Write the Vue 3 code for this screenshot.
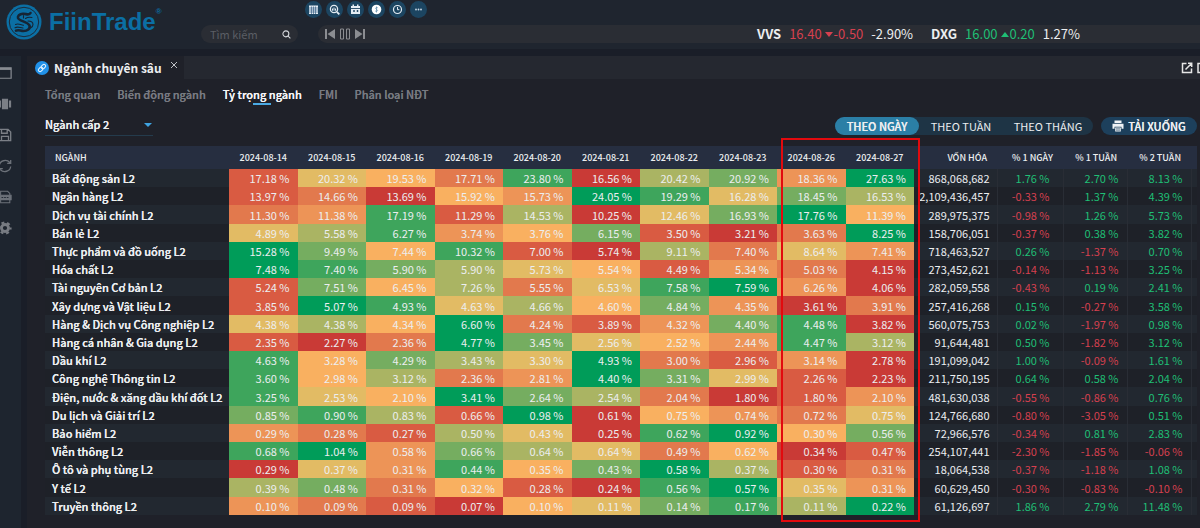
<script setup>
import { ref } from 'vue'

const dates = [
  '2024-08-14', '2024-08-15', '2024-08-16', '2024-08-19', '2024-08-20',
  '2024-08-21', '2024-08-22', '2024-08-23', '2024-08-26', '2024-08-27',
]

// name | daily weights | heat level per day (0 lowest, 9 highest) | market cap | 1 day, 1 week, 2 weeks
const source = [
  'Bất động sản L2|17.18 20.32 19.53 17.71 23.80 16.56 20.42 20.92 18.36 27.63|1542806739|868,068,682|1.76 2.70 8.13',
  'Ngân hàng L2|13.97 14.66 13.69 15.92 15.73 24.05 19.29 16.28 18.45 16.53|1204398576|2,109,436,457|-0.33 1.37 4.39',
  'Dịch vụ tài chính L2|11.30 11.38 17.19 11.29 14.53 10.25 12.46 16.93 17.76 11.39|2381605794|289,975,375|-0.98 1.26 5.73',
  'Bán lẻ L2|4.89 5.58 6.27 3.74 3.76 6.15 3.50 3.21 3.63 8.25|5683471029|158,706,051|-0.37 0.38 3.82',
  'Thực phẩm và đồ uống L2|15.28 9.49 7.44 10.32 7.00 5.74 9.11 7.40 8.64 7.41|9748106253|718,463,527|0.26 -1.37 0.70',
  'Hóa chất L2|7.48 7.40 5.90 5.90 5.73 5.54 4.49 5.34 5.03 4.15|9876541320|273,452,621|-0.14 -1.13 3.25',
  'Tài nguyên Cơ bản L2|5.24 7.51 6.45 7.26 5.55 6.53 7.58 7.59 6.26 4.06|1746258930|282,059,558|-0.43 0.19 2.41',
  'Xây dựng và Vật liệu L2|3.85 5.07 4.93 4.63 4.66 4.60 4.84 4.35 3.61 3.91|1985647302|257,416,268|0.15 -0.27 3.58',
  'Hàng & Dịch vụ Công nghiệp L2|4.38 4.38 4.34 6.60 4.24 3.89 4.32 4.40 4.48 3.82|5649213780|560,075,753|0.02 -1.97 0.98',
  'Hàng cá nhân & Gia dụng L2|2.35 2.27 2.36 4.77 3.45 2.56 2.52 2.44 4.47 3.12|1029754386|91,644,481|0.50 -1.82 3.12',
  'Dầu khí L2|4.63 3.28 4.29 3.43 3.30 4.93 3.00 2.96 3.14 2.78|8476592130|191,099,042|1.00 -0.09 1.61',
  'Công nghệ Thông tin L2|3.60 2.98 3.12 2.36 2.81 4.40 3.31 2.99 2.26 2.23|8462397510|211,750,195|0.64 0.58 2.04',
  'Điện, nước & xăng dầu khí đốt L2|3.25 2.53 2.10 3.41 2.64 2.54 2.04 1.80 1.80 2.10|8549762013|481,630,038|-0.55 -0.86 0.76',
  'Du lịch và Giải trí L2|0.85 0.90 0.83 0.66 0.98 0.61 0.75 0.74 0.72 0.75|7861904325|124,766,680|-0.80 -3.05 0.51',
  'Bảo hiểm L2|0.29 0.28 0.27 0.50 0.43 0.25 0.62 0.92 0.30 0.56|3216508947|72,966,576|-0.34 0.81 2.83',
  'Viễn thông L2|0.68 1.04 0.58 0.66 0.64 0.64 0.49 0.62 0.34 0.47|8937652401|254,107,441|-2.30 -1.85 -0.06',
  'Ô tô và phụ tùng L2|0.29 0.37 0.31 0.44 0.35 0.43 0.58 0.37 0.30 0.31|0538479612|18,064,538|-0.37 -1.18 1.08',
  'Y tế L2|0.39 0.48 0.31 0.32 0.28 0.24 0.56 0.57 0.35 0.31|6724108953|60,629,450|-0.30 -0.83 -0.10',
  'Truyền thông L2|0.10 0.09 0.09 0.07 0.10 0.11 0.14 0.17 0.11 0.22|3210457869|61,126,697|1.86 2.79 11.48',
]

const rows = source.map((line) => {
  const [name, weights, levels, cap, changes] = line.split('|')
  return {
    name,
    cap,
    cells: weights.split(' ').map((value, i) => ({ value, level: levels[i] })),
    changes: changes.split(' '),
  }
})

const tabs = ['Tổng quan', 'Biến động ngành', 'Tỷ trọng ngành', 'FMI', 'Phân loại NĐT']
const activeTab = ref('Tỷ trọng ngành')
const periods = ['THEO NGÀY', 'THEO TUẦN', 'THEO THÁNG']
const activePeriod = ref('THEO NGÀY')
const level = ref('Ngành cấp 2')
const query = ref('')
</script>

<template>
  <div class="app">
    <header class="top">
      <a class="brand" href="#" aria-label="FiinTrade">
        <svg class="brand-mark" viewBox="0 0 36 36" aria-hidden="true">
          <circle cx="18" cy="18" r="17.5" fill="#0b6fa4" />
          <circle cx="18" cy="18" r="14.7" fill="none" stroke="#1c2a38" stroke-width="1" />
          <g fill="none" stroke="#162534" stroke-linecap="round">
            <path d="M24.500 9c-1.500 3-4.500.500-7.500.700-3.800.300-5.500 2.300-5 4.300.800 3 10 3.800 11.500 7.500 1 3.400-2.200 5.500-6 5.500-3.200 0-4.600-1.800-7.500-.300" stroke-width="2.600" />
            <path d="M9.500 20.500c3-1.500 5 .500 8 .700M9 23.700c3-1.500 5.500.300 8 .300M17.500 11.500v2.500M19.500 14.500c2-1.500 4-1.500 6.500-1M22 17c3 0 5 1.500 5 3.500s-1 2.500-2.500 3.500" stroke-width="1.100" />
          </g>
        </svg>
        <span class="brand-name">FiinTrade<sup>®</sup></span>
      </a>

      <div class="top-main">
        <nav class="quick" aria-label="Công cụ">
          <button type="button" aria-label="Bảng giá">
            <svg viewBox="0 0 17 17"><rect x="4" y="4.500" width="9" height="8.500" fill="#e4ecf3" /><path d="M4 7h9M4 9h9M4 11h9M6.500 5.500v7.500M8.500 5.500v7.500M10.500 5.500v7.500" stroke="#24527a" stroke-width=".6" /></svg>
          </button>
          <button type="button" aria-label="Phân tích">
            <svg viewBox="0 0 17 17" fill="none" stroke="#e4ecf3"><circle cx="8" cy="8" r="3.600" stroke-width="1.300" /><path d="M10.800 10.800l2.500 2.500" stroke-width="1.800" /><path d="M6.500 7.500v2.200M8 6.500v3.200M9.500 7.500v2.200" stroke-width="1" /></svg>
          </button>
          <button type="button" aria-label="Lịch sự kiện">
            <svg viewBox="0 0 17 17"><path d="M4 5h9v8H4zM5.500 3.500h1.500V5H5.500zM10 3.500h1.500V5H10z" fill="#e4ecf3" /><path d="M4 7.500h9M6 10h2M9.500 10h2M7 9v2M10.500 9v2" stroke="#1d4460" stroke-width=".9" /></svg>
          </button>
          <button type="button" aria-label="Thị trường">
            <svg viewBox="0 0 17 17"><circle cx="8.500" cy="8.500" r="4.800" fill="#fff" /><path d="M9.800 6.800c-2-1-3 .7-1.300 1.500 2 .900.900 2.700-1.300 1.700M8.500 5.500v6" fill="none" stroke="#5d8bab" stroke-width=".7" /></svg>
          </button>
          <button type="button" aria-label="Lịch sử">
            <svg viewBox="0 0 17 17" fill="none" stroke="#e4ecf3"><circle cx="8.500" cy="8.500" r="4" stroke-width="1.200" /><path d="M8.500 6v2.700h1.800" stroke-width="1" /></svg>
          </button>
          <button type="button" aria-label="Thêm">
            <svg viewBox="0 0 17 17" fill="#c9d9e6"><circle cx="6" cy="8.500" r=".9" /><circle cx="8.500" cy="8.500" r=".9" /><circle cx="11" cy="8.500" r=".9" /></svg>
          </button>
        </nav>

        <div class="strip">
          <label class="search">
            <input v-model="query" type="text" placeholder="Tìm kiếm" aria-label="Tìm kiếm" />
            <svg viewBox="0 0 10 10" fill="none" stroke="#d5d8dd" stroke-width="1.200"><circle cx="4.300" cy="4.300" r="3.300" /><path d="M6.800 6.800l2.500 2.500" /></svg>
          </label>
          <div class="ticker">
            <div class="player">
              <button type="button" aria-label="Trước"><svg viewBox="0 0 10 12" fill="#8b8d91"><path d="M0 1h2v10H0zM10 1v10L2.500 6z" /></svg></button>
              <button type="button" aria-label="Tạm dừng"><svg viewBox="0 0 10 12" fill="none" stroke="#8b8d91"><path d="M.5 1h3v10h-3zM6.500 1h3v10h-3z" /></svg></button>
              <button type="button" aria-label="Sau"><svg viewBox="0 0 10 12" fill="#8b8d91"><path d="M8 1h2v10H8zM0 1v10l7.500-5z" /></svg></button>
            </div>
            <div class="quotes">
              <div class="quote">
                <b>VVS</b>
                <span class="down">16.40 <i class="tri tri-down"></i>-0.50</span>
                <span>-2.90%</span>
              </div>
              <div class="quote">
                <b>DXG</b>
                <span class="up">16.00 <i class="tri tri-up"></i>0.20</span>
                <span>1.27%</span>
              </div>
            </div>
          </div>
        </div>
      </div>
    </header>

    <div class="workspace">
      <nav class="side" aria-label="Thanh công cụ">
        <button type="button" aria-label="Cửa sổ"><svg viewBox="0 0 16 16"><path d="M1 2h14v12H1z" fill="none" stroke="#878b91" stroke-width="1.400" /><path d="M1 2h14v2.500H1z" fill="#878b91" /></svg></button>
        <button type="button" aria-label="Bố cục"><svg viewBox="0 0 16 16" fill="#7b7f86"><path d="M4.500 2h7v12h-7zM1 4h2.500v8H1zM12.500 4H15v8h-2.500z" /></svg></button>
        <button type="button" aria-label="Lưu"><svg viewBox="0 0 16 16" fill="none" stroke="#7b7f86" stroke-width="1.500"><path d="M1 1.500h10.500l3 3v10H1zM4 1.500v4.500h6.500V1.500M4 14.500V9.500h8v5" /></svg></button>
        <button type="button" aria-label="Làm mới"><svg viewBox="0 0 16 16" fill="none" stroke="#6c7179" stroke-width="1.500"><path d="M1.500 7.500c.500-5.500 8-8 12-3.500M14.500 1v4h-4M14.500 8.500c-.500 5.500-8 8-12 3.500M1.500 15v-4h4" /></svg></button>
        <button type="button" aria-label="In"><svg viewBox="0 0 16 16" fill="none" stroke="#6c7179" stroke-width="1.200"><path d="M3 6V1.500h8l2.500 2.500v2M3 11v3.500h10.500V11" /><path d="M1 6h14v5H1z" fill="#6c7179" /><path d="M4 8.500h8" stroke="#252c37" stroke-dasharray="2 1" /></svg></button>
        <button type="button" aria-label="Cài đặt"><svg viewBox="0 0 16 16" fill="none" stroke="#777b82"><circle cx="8" cy="8" r="4" stroke-width="3.200" /><circle cx="8" cy="8" r="6.300" stroke-width="2.500" stroke-dasharray="3.300 3.300" stroke-dashoffset="1.600" /></svg></button>
      </nav>

      <main class="panel">
        <div class="window-bar">
          <div class="window-tab">
            <svg class="link-icon" viewBox="0 0 14 14"><circle cx="7" cy="7" r="7" fill="#2191e8" /><g transform="rotate(-45 7 7)" fill="none" stroke="#e9f4fd"><rect x="2.500" y="5.300" width="5" height="3.400" rx="1.700" /><rect x="6.500" y="5.300" width="5" height="3.400" rx="1.700" /></g></svg>
            <h1>Ngành chuyên sâu</h1>
            <button type="button" class="close" aria-label="Đóng"><svg viewBox="0 0 8 8" stroke="#bfc2c7" fill="none"><path d="M1 1l6 6M7 1L1 7" /></svg></button>
          </div>
          <div class="window-rest">
            <button type="button" aria-label="Mở cửa sổ mới"><svg viewBox="0 0 12 12" fill="none" stroke="#e6e6e6" stroke-width="1.500"><path d="M5.500 1.500h-4v9h9v-4M7 1.300h3.700V5M10.500 1.500L4.500 7.500" /></svg></button>
            <button type="button" aria-label="Phóng to"><svg viewBox="0 0 12 12" fill="none" stroke="#e6e6e6" stroke-width="1.500"><path d="M1 1.500h10v9H1z" /></svg></button>
          </div>
        </div>

        <nav class="tabs">
          <a v-for="tab in tabs" :key="tab" href="#" :class="{ active: tab === activeTab }" @click.prevent="activeTab = tab">{{ tab }}</a>
        </nav>

        <div class="controls">
          <label class="picker">
            <select v-model="level" aria-label="Cấp ngành">
              <option>Ngành cấp 1</option>
              <option>Ngành cấp 2</option>
              <option>Ngành cấp 3</option>
            </select>
            <i class="caret"></i>
          </label>
          <div class="actions">
            <div class="segments">
              <button v-for="period in periods" :key="period" type="button" :class="{ active: period === activePeriod }" @click="activePeriod = period">{{ period }}</button>
            </div>
            <button type="button" class="download">
              <svg viewBox="0 0 12 12" fill="#f0f3f6"><path d="M2.500.5h7v2.500h-7zM.5 3.700h11v5H9.500v-2h-7v2h-2zM3.200 7.500h5.600v4H3.200z" /><path d="M4 8.800h4M4 10.200h4" stroke="#1d405c" stroke-width=".6" /></svg>
              TẢI XUỐNG
            </button>
          </div>
        </div>

        <div class="sheet">
          <table>
            <colgroup>
              <col class="c-name" />
              <col v-for="d in dates" :key="d" />
              <col class="c-cap" />
              <col class="c-day" />
              <col class="c-week" />
              <col class="c-week" />
              <col class="c-end" />
            </colgroup>
            <thead>
              <tr>
                <th class="name" scope="col">NGÀNH</th>
                <th v-for="d in dates" :key="d" scope="col">{{ d }}</th>
                <th class="right" scope="col">VỐN HÓA</th>
                <th class="right" scope="col">% 1 NGÀY</th>
                <th class="right" scope="col">% 1 TUẦN</th>
                <th class="right" scope="col">% 2 TUẦN</th>
                <td></td>
              </tr>
            </thead>
            <tbody>
              <tr v-for="row in rows" :key="row.name">
                <th class="name" scope="row">{{ row.name }}</th>
                <td v-for="(cell, i) in row.cells" :key="i" :class="'h' + cell.level">{{ cell.value }} %</td>
                <td class="cap">{{ row.cap }}</td>
                <td v-for="(change, i) in row.changes" :key="'c' + i" class="change" :class="[change < 0 ? 'down' : 'up', { day: i === 0 }]">{{ change }} %</td>
                <td></td>
              </tr>
            </tbody>
          </table>
          <div class="marker"></div>
        </div>
      </main>
    </div>
  </div>
</template>

<style>
body {
  background: #1a1e28;
}
</style>

<style scoped>
.app {
  display: flex;
  flex-direction: column;
  min-height: 100vh;
  overflow: hidden;
  background: #1a1e28;
  color: #eceef0;
  font-family: "Noto Sans CJK SC", "Noto Sans", sans-serif;
  font-size: 11px;
  line-height: 18px;
}
* {
  box-sizing: border-box;
}
button, input, select {
  margin: 0;
  padding: 0;
  border: 0;
  background: none;
  color: inherit;
  font: inherit;
}
button, label {
  cursor: pointer;
}
svg {
  display: block;
}
a {
  color: inherit;
  text-decoration: none;
}

.top {
  display: flex;
  height: 49px;
  background: #1f252f;
}
.brand {
  display: flex;
  flex: none;
  align-items: center;
  gap: 7px;
  width: 201px;
  padding: 0 0 5px 6px;
  color: #0b6fa4;
}
.brand-mark {
  width: 36px;
  height: 36px;
}
.brand-name {
  display: flex;
  font: bold 24px/28px "Liberation Sans", Arial, sans-serif;
}
.brand-name sup {
  font-size: 8px;
  line-height: 8px;
}
.top-main {
  display: flex;
  flex: 1;
  flex-direction: column;
  gap: 7px;
  min-width: 0;
  padding-top: 1px;
}
.quick {
  display: flex;
  gap: 4px;
  padding-left: 104px;
}
.quick button {
  width: 17px;
  height: 17px;
  border-radius: 50%;
  background: #1c4561;
}
.strip {
  display: flex;
  gap: 20px;
}
.search {
  display: flex;
  align-items: center;
  width: 97px;
  height: 18px;
  padding: 0 7px 0 9px;
  border-radius: 9px;
  background: #2a2d34;
}
.search input {
  flex: 1;
  min-width: 0;
  outline: 0;
}
.search input::placeholder {
  color: #5b5e65;
  opacity: 1;
}
.search svg {
  width: 9px;
  height: 9px;
}
.ticker {
  display: flex;
  flex: 1;
  align-items: center;
  justify-content: space-between;
  height: 18px;
  padding: 0 120px 0 7px;
  border-radius: 9px 0 0 9px;
  background: #2a2d34;
}
.player {
  display: flex;
  gap: 5px;
}
.player svg {
  width: 10px;
  height: 12px;
}
.quotes, .quote {
  display: flex;
}
.quotes {
  gap: 18px;
  font-size: 13px;
}
.quote {
  gap: 8px;
}
.down {
  color: #d6404f;
}
.up {
  color: #1fbf75;
}
.tri {
  display: inline-block;
  border: 4px solid transparent;
}
.tri-down {
  border-top: 5px solid currentColor;
  border-bottom: 0;
  margin: 0 1px 2px 0;
}
.tri-up {
  border-bottom: 5px solid currentColor;
  border-top: 0;
  margin: 0 1px 2px 0;
}

.workspace {
  display: flex;
  flex: 1;
  gap: 6px;
  margin-top: 7px;
}
.side {
  display: flex;
  flex: none;
  flex-direction: column;
  align-items: flex-end;
  gap: 17px;
  width: 21px;
  padding: 10px 9px 0 0;
  background: #1e252f;
}
.side svg {
  width: 14px;
  height: 14px;
}
.panel {
  display: flex;
  flex: 1;
  flex-direction: column;
  min-width: 0;
  background: #1f2129;
}
.window-bar {
  display: flex;
  height: 23px;
}
.window-tab {
  display: flex;
  align-items: center;
  width: 157px;
  padding-left: 8px;
}
.link-icon {
  flex: none;
  width: 14px;
  height: 14px;
}
h1 {
  margin: 0 8px 0 5px;
  font-size: 12px;
  line-height: 18px;
  white-space: nowrap;
}
.close {
  margin-bottom: 5px;
}
.close svg {
  width: 8px;
  height: 8px;
}
.window-rest {
  display: flex;
  flex: 1;
  align-items: center;
  justify-content: flex-end;
  gap: 4px;
  margin-right: -9px;
  background: #252830;
}
.window-rest svg {
  width: 12px;
  height: 12px;
}
.tabs {
  display: flex;
  gap: 17px;
  padding: 6px 18px 0;
  color: #777a81;
}
/* Medium weight, thickened without changing the advance widths */
.tabs, .picker select, .segments .active, .download, tbody th {
  font-weight: 500;
  text-shadow: 0 0 currentColor;
}
.tabs a {
  position: relative;
  height: 20px;
  text-shadow: 0 0 currentColor;
}
.tabs .active {
  color: #f4f5f6;
}
.tabs .active::after {
  position: absolute;
  bottom: 0;
  left: calc(50% - 9px);
  width: 18px;
  height: 2px;
  background: #4aaae4;
  content: "";
}
.controls {
  display: flex;
  align-items: flex-start;
  justify-content: space-between;
  padding: 10px 3px 0 18px;
}
.picker {
  display: flex;
  align-items: center;
  width: 108px;
  border-bottom: 1px solid #243b4c;
}
.picker select {
  flex: 1;
  height: 20px;
  padding-bottom: 2px;
  outline: 0;
  appearance: none;
}
.caret {
  margin-right: 1px;
  border: 4px solid transparent;
  border-top-color: #3fa4e2;
  border-bottom: 0;
}
.actions, .segments {
  display: flex;
}
.actions {
  gap: 8px;
  margin-top: 2px;
}
.segments {
  border-radius: 9px;
  background: #1e3445;
}
.segments button {
  width: 84px;
  height: 18px;
  border-radius: 9px;
}
.segments button:last-child {
  width: 90px;
}
.segments .active {
  background: #2b7fa6;
}
.download {
  display: flex;
  align-items: center;
  justify-content: center;
  gap: 4px;
  width: 96px;
  height: 18px;
  border-radius: 9px;
  background: #1d405c;
}
.download svg {
  width: 12px;
  height: 12px;
}

.sheet {
  position: relative;
  display: grid;
  flex: 1;
  padding: 10px 3px 13px 18px;
}
table {
  width: 100%;
  height: 100%;
  border-collapse: collapse;
  table-layout: fixed;
}
.c-name { width: 184px; }
.c-cap { width: 83px; }
.c-day { width: 66px; }
.c-week { width: 64px; }
.c-end { width: 6px; }
th, td {
  padding: 0;
  white-space: nowrap;
}
thead tr {
  height: 23px;
  background: #262e40;
}
thead th {
  font-size: 9px;
  font-weight: 500;
}
thead .right {
  padding-right: 10px;
  text-align: right;
}
tbody tr {
  background: #1e2128;
}
tbody tr:nth-child(odd) {
  background: #222830;
}
tbody td {
  padding-right: 8px;
  text-align: right;
}
tbody td:last-child {
  padding: 0;
}
.name {
  text-align: left;
}
thead .name {
  padding-left: 10px;
}
tbody .name {
  padding-left: 7px;
}
tbody .cap {
  padding-right: 7px;
}
.cap, .change {
  border-right: 1px solid #292d35;
}
tbody .day {
  padding-right: 13px;
}
.h0 { background: #c93a36; }
.h1 { background: #d95b42; }
.h2 { background: #e2794d; }
.h3 { background: #ed9457; }
.h4 { background: #f9b060; }
.h5 { background: #e2bb64; }
.h6 { background: #aab463; }
.h7 { background: #75ad60; }
.h8 { background: #3ea55c; }
.h9 { background: #009c59; }

.marker {
  position: absolute;
  top: 2px;
  right: 280px;
  bottom: 6px;
  width: 139px;
  border: 2px solid #e20a0e;
  pointer-events: none;
}
</style>
